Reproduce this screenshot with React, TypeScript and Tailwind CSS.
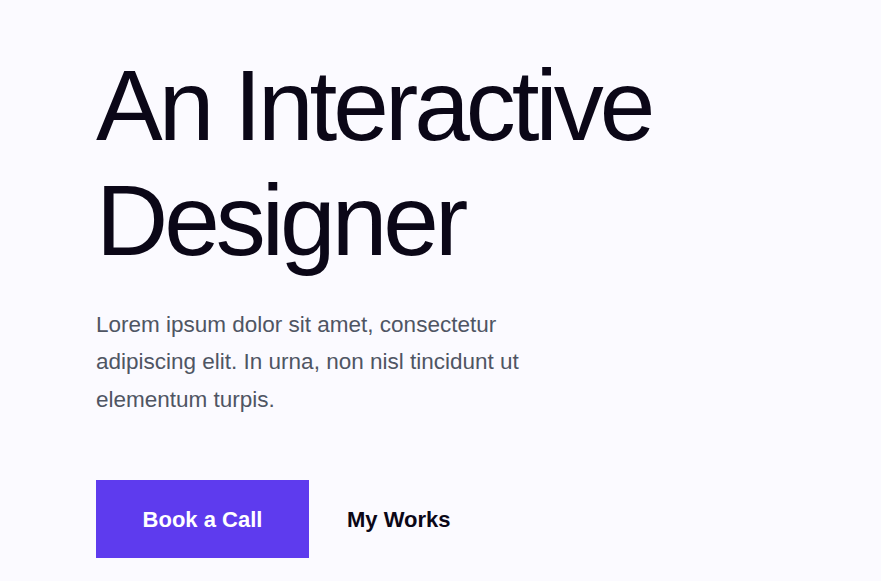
const App = () => {
  return (
    <div className="min-h-screen bg-[#fbfaff] font-['Liberation_Sans',Arial,sans-serif]">
      <div className="flex flex-col pl-[96px] pt-[48px]">
        <h1 className="text-[100px] leading-[1.15] tracking-[-4px] text-[#0b0717] font-normal">
          An Interactive
          <br />
          Designer
        </h1>
        <p className="mt-[28px] max-w-[460px] text-[22.5px] leading-[37.4px] text-[#4f5563]">
          Lorem ipsum dolor sit amet, consectetur adipiscing elit. In urna, non nisl tincidunt ut elementum turpis.
        </p>
        <div className="mt-[62px] flex items-center gap-[38px]">
          <button className="h-[78px] w-[213px] bg-[#5e3bee] text-[22px] font-bold text-white">
            Book a Call
          </button>
          <button className="text-[22px] font-bold text-[#0b0717]">My Works</button>
        </div>
      </div>
    </div>
  );
};

export default App;
